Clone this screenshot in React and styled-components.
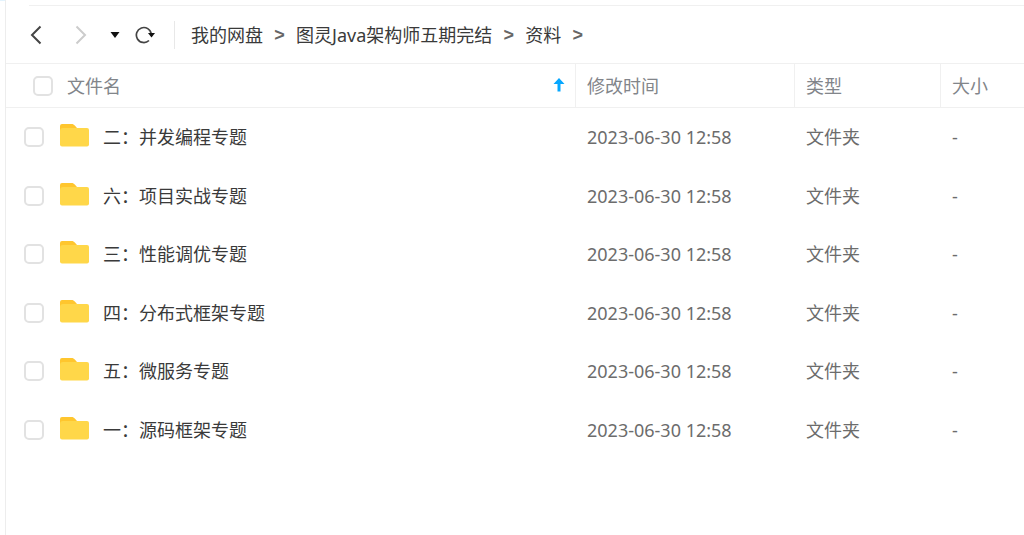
import React, { useState } from 'react'
import styled, { createGlobalStyle } from 'styled-components'

const GlobalStyle = createGlobalStyle`
  * {
    box-sizing: border-box;
  }
  body {
    margin: 0;
    background: #fff;
    color: #3a3a3a;
    font-family: 'Noto Sans', 'Noto Sans CJK SC', sans-serif;
    font-size: 18px;
    line-height: 24px;
  }
`

const Page = styled.div`
  display: flex;
  min-height: 100vh;
`
const Rail = styled.div`
  width: 6px;
  flex: none;
  border-right: 1px solid #ededed;
  background: linear-gradient(#e3f3fd 1px, #fff 1px);
`
const Main = styled.main`
  flex: 1;
  min-width: 0;
`
const TopLine = styled.div`
  height: 6px;
  margin-left: 23px;
  border-bottom: 1px solid #f0f0f0;
`

const Toolbar = styled.header`
  display: flex;
  align-items: center;
  height: 57px;
  padding-left: 20px;
`
const IconBtn = styled.button`
  display: flex;
  align-items: center;
  justify-content: center;
  width: 20px;
  height: 28px;
  margin-right: ${({ $gap }) => $gap}px;
  padding: 0;
  border: 0;
  background: none;
  color: #444;
  cursor: pointer;

  &:disabled {
    color: #ccc;
    cursor: default;
  }
`
const Crumbs = styled.nav`
  display: flex;
  align-items: center;
  height: 28px;
  padding-left: 16px;
  border-left: 1px solid #e8e8e8;
`
const Crumb = styled.a`
  color: #3a3a3a;
  line-height: 28px;
  text-decoration: none;
  white-space: nowrap;
`
const Separator = styled.span`
  width: 33px;
  color: #666;
  font-family: 'Liberation Sans', sans-serif;
  font-weight: bold;
  text-align: center;
`

const Table = styled.table`
  width: 100%;
  table-layout: fixed;
  border-collapse: separate;
  border-spacing: 0;
`
const Th = styled.th`
  width: ${({ $width }) => ($width ? `${$width}px` : 'auto')};
  height: 45px;
  padding: 0 0 0 ${({ $first }) => ($first ? 27 : 11)}px;
  border: solid #f0f0f0;
  border-width: ${({ $first }) => ($first ? '1px 0' : '1px 0 1px 1px')};
  color: #82858a;
  font-weight: normal;
  text-align: left;
`
const Row = styled.tr`
  height: 58px;

  &:nth-child(even) {
    height: 59px;
  }
`
const Td = styled.td`
  padding: 0 0 0 ${({ $first }) => ($first ? 18 : 12)}px;
  color: ${({ $first }) => ($first ? '#3a3a3a' : '#6c6c6c')};
  white-space: nowrap;
`
const Cell = styled.div`
  display: flex;
  align-items: center;
`
const Check = styled.input.attrs({ type: 'checkbox' })`
  appearance: none;
  flex: none;
  width: 20px;
  height: 20px;
  margin: 0 ${({ $gap }) => $gap}px 0 0;
  border: 2px solid #e2e2e2;
  border-radius: 5px;
  background: #fff;

  &:checked {
    border-color: #06a7ff;
    background: #06a7ff;
  }
`
const SortBtn = styled.button`
  display: flex;
  margin-left: auto;
  margin-right: 10px;
  padding: 0 0 2px;
  border: 0;
  background: none;
  cursor: pointer;
`
const NameLabel = styled.label`
  display: flex;
  align-items: center;
  gap: 14px;
`

const BackIcon = () => (
  <svg width="12" height="20" viewBox="0 0 12 20" fill="none" stroke="currentColor" strokeWidth="2">
    <path d="M10.5 1.5 2 10l8.500 8.500" />
  </svg>
)

const ForwardIcon = () => (
  <svg width="12" height="20" viewBox="0 0 12 20" fill="none" stroke="currentColor" strokeWidth="2">
    <path d="M1.500 1.500 10 10l-8.500 8.500" />
  </svg>
)

const CaretIcon = () => (
  <svg width="10" height="6" viewBox="0 0 10 6">
    <path d="M.5 0h9L5 6z" fill="#111" />
  </svg>
)

const RefreshIcon = () => (
  <svg width="20" height="18" viewBox="0 0 20 18">
    <path d="M16.300 8A7.500 7.500 0 1 0 14 14.500" fill="none" stroke="#444" strokeWidth="1.700" />
    <path d="M13 7h7l-3.500 4.500z" fill="#111" />
  </svg>
)

const SortIcon = () => (
  <svg width="12" height="14" viewBox="0 0 12 14" fill="#06a7ff">
    <path d="M6 0l5.500 6H7.500v7.500h-3V6H.5z" />
  </svg>
)

const FolderIcon = () => (
  <svg width="29" height="26" viewBox="0 0 29 26">
    <path d="M0 2a2 2 0 0 1 2-2h9.500c1.500 0 2.500.5 3.500 1.700L17 4v6H0z" fill="#ffc62e" />
    <path d="M0 7a3 3 0 0 1 3-3h24a2 2 0 0 1 2 2v14.500a2 2 0 0 1-2 2H2a2 2 0 0 1-2-2z" fill="#ffd749" />
  </svg>
)

const crumbs = ['我的网盘', '图灵Java架构师五期完结', '资料']

const folders = [
  '二：并发编程专题',
  '六：项目实战专题',
  '三：性能调优专题',
  '四：分布式框架专题',
  '五：微服务专题',
  '一：源码框架专题',
].map(name => ({ name, modified: '2023-06-30 12:58', type: '文件夹', size: '-' }))

export default function App() {
  const [selected, setSelected] = useState([])

  const toggle = name =>
    setSelected(
      selected.includes(name)
        ? selected.filter(n => n !== name)
        : [...selected, name]
    )
  const allSelected = selected.length === folders.length
  const toggleAll = () =>
    setSelected(allSelected ? [] : folders.map(f => f.name))

  return (
    <Page>
      <GlobalStyle />
      <Rail />
      <Main>
        <TopLine />
        <Toolbar>
          <IconBtn $gap={25} aria-label="后退">
            <BackIcon />
          </IconBtn>
          <IconBtn $gap={14} aria-label="前进" disabled>
            <ForwardIcon />
          </IconBtn>
          <IconBtn $gap={10} aria-label="历史记录">
            <CaretIcon />
          </IconBtn>
          <IconBtn $gap={19} aria-label="刷新">
            <RefreshIcon />
          </IconBtn>
          <Crumbs>
            {crumbs.map(crumb => (
              <React.Fragment key={crumb}>
                <Crumb href="#">{crumb}</Crumb>
                <Separator>&gt;</Separator>
              </React.Fragment>
            ))}
          </Crumbs>
        </Toolbar>
        <Table>
          <thead>
            <tr>
              <Th $first>
                <Cell>
                  <Check
                    id="all"
                    $gap={14}
                    checked={allSelected}
                    onChange={toggleAll}
                  />
                  <label htmlFor="all">文件名</label>
                  <SortBtn aria-label="排序">
                    <SortIcon />
                  </SortBtn>
                </Cell>
              </Th>
              <Th $width={219}>修改时间</Th>
              <Th $width={146}>类型</Th>
              <Th $width={84}>大小</Th>
            </tr>
          </thead>
          <tbody>
            {folders.map(({ name, modified, type, size }, i) => (
              <Row key={name}>
                <Td $first>
                  <Cell>
                    <Check
                      id={`folder-${i}`}
                      $gap={16}
                      checked={selected.includes(name)}
                      onChange={() => toggle(name)}
                    />
                    <NameLabel htmlFor={`folder-${i}`}>
                      <FolderIcon />
                      {name}
                    </NameLabel>
                  </Cell>
                </Td>
                <Td>{modified}</Td>
                <Td>{type}</Td>
                <Td>{size}</Td>
              </Row>
            ))}
          </tbody>
        </Table>
      </Main>
    </Page>
  )
}
